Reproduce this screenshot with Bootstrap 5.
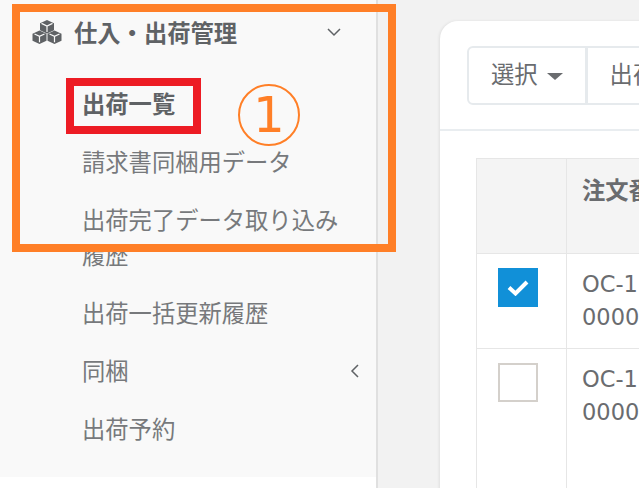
<!DOCTYPE html>
<html lang="ja">
<head>
  <meta charset="UTF-8" />
  <meta name="viewport" content="width=device-width, initial-scale=1" />
  <title>出荷一覧</title>
  <link href="https://cdn.jsdelivr.net/npm/bootstrap@5.3.0/dist/css/bootstrap.min.css" rel="stylesheet" />
  <style>
    html, body { height: 488px; overflow: hidden; }
    body {
      background: #f2f2f2;
      color: #6a6c6f;
      font-family: "Noto Sans CJK JP", "Open Sans", sans-serif;
      font-size: 23.3px;
    }
    .page-wrap { height: 488px; width: 639px; overflow: hidden; }
    .side-col {
      width: 378px;
      flex-shrink: 0;
      background: #fff;
      border-right: 2px solid #e0e0e0;
    }
    .side-menu { background: #f9f9f9; height: 477px; }
    .side-head {
      height: 64px;
      margin-bottom: 22px;
      padding-left: 32px;
      padding-right: 35px;
      font-weight: 700;
      color: #5f6265;
    }
    .side-title { gap: 12px; }
    .side-item {
      display: block;
      padding: 0 30px 0 82px;
      line-height: 35px;
      margin-bottom: 23px;
      color: #77797c;
      text-decoration: none;
    }
    .side-item.active-item { font-weight: 700; color: #5f6265; }
    .side-group { padding-right: 17px; }
    .main-col { padding: 21px 0 0 62px; }
    .panel-box {
      width: 420px;
      height: 600px;
      background: #fff;
      border-radius: 18px 0 0 0;
      box-shadow: -1px 0 3px rgba(0,0,0,.08);
    }
    .tool-bar {
      height: 110px;
      padding: 25px 0 0 27px;
      border-bottom: 2px solid #e9edf0;
    }
    .tool-group { flex-wrap: nowrap; }
    .tool-btn {
      height: 59px;
      padding: 0 22px 4px;
      font-size: 23.3px;
      color: #6a6c6f;
      background: #fff;
      border: 2px solid #e6eaed;
      white-space: nowrap;
    }
    .tool-btn.dropdown-toggle {
      border-top-right-radius: 0;
      border-bottom-right-radius: 0;
    }
    .tool-btn.dropdown-toggle::after {
      margin-left: 9px;
      border-top-width: 7px;
      border-left-width: 8px;
      border-right-width: 8px;
      vertical-align: 3px;
    }
    .table-wrap { padding: 27px 0 0 36px; }
    .order-table {
      table-layout: fixed;
      width: 500px;
      margin: 0;
      border-color: #e6e6e6;
      --bs-table-color: #6a6c6f;
      --bs-table-bg: #fff;
    }
    .order-table th, .order-table td {
      padding: 14px 15px;
      line-height: 33px;
      border-width: 1px;
      white-space: nowrap;
      overflow: hidden;
    }
    .order-table th { background: #f4f4f4; height: 95px; font-weight: 700; vertical-align: top; }
    .order-table td { height: 95px; vertical-align: top; font-family: "DejaVu Sans", sans-serif; font-size: 22.5px; }
    .order-table tr.tall-row td { height: 220px; }
    .check-cell { width: 90px; }
    .tick-box {
      width: 40px;
      height: 39px;
      margin-left: 6px;
      border: 2px solid #d4d0cb;
      background: #fff;
    }
    .tick-box.on { background: #1190d8; border-color: #1190d8; }
    .orange-frame {
      position: absolute;
      left: 12px;
      top: 4px;
      width: 384px;
      height: 248px;
      border: 8px solid #ff7f27;
    }
    .red-frame {
      position: absolute;
      left: 66px;
      top: 78px;
      width: 135px;
      height: 56px;
      border: 8px solid #ed1c24;
    }
    .num-mark {
      position: absolute;
      left: 238px;
      top: 84px;
      width: 62px;
      height: 62px;
      border: 2px solid #ff7f27;
      border-radius: 50%;
      color: #ff7f27;
      font-family: "DejaVu Sans", sans-serif;
      font-size: 50px;
      line-height: 58px;
      text-align: center;
    }
  </style>
</head>
<body>

<div class="page-wrap d-flex position-relative">
  <aside class="side-col">
    <nav class="side-menu">
      <div class="side-head d-flex align-items-center justify-content-between">
        <span class="side-title d-flex align-items-center">
          <svg width="30" height="24" viewBox="0 0 30 24" fill="#5f6265">
            <path d="M15 0l7 3.2v7L15 13.400l-7-3.200v-7z"/>
            <path d="M7.500 10.500l7 3.200v7l-7 3.300-7-3.300v-7z"/>
            <path d="M22.500 10.500l7 3.200v7l-7 3.300-7-3.300v-7z"/>
            <path d="M9.500 3.400L15 6l5.500-2.600M15 6v6M2.500 14l5 2.300 5-2.300M7.500 16.300v6M17.500 14l5 2.300 5-2.300M22.500 16.300v6" fill="none" stroke="#f9f9f9" stroke-width="1.200"/>
          </svg>
          仕入・出荷管理
        </span>
        <svg width="14" height="9" viewBox="0 0 14 9" fill="none" stroke="#5f6265" stroke-width="1.500"><path d="M1 1l6 6 6-6"/></svg>
      </div>
      <a class="side-item active-item" href="#">出荷一覧</a>
      <a class="side-item" href="#">請求書同梱用データ</a>
      <a class="side-item" href="#">出荷完了データ取り込み履歴</a>
      <a class="side-item" href="#">出荷一括更新履歴</a>
      <a class="side-item side-group d-flex justify-content-between align-items-center" href="#">
        同梱
        <svg width="9" height="14" viewBox="0 0 9 14" fill="none" stroke="#5f6265" stroke-width="1.500"><path d="M8 1L2 7l6 6"/></svg>
      </a>
      <a class="side-item" href="#">出荷予約</a>
    </nav>
  </aside>

  <main class="main-col">
    <div class="panel-box">
      <div class="tool-bar">
        <div class="btn-group tool-group">
          <button type="button" class="btn tool-btn dropdown-toggle">選択</button>
          <button type="button" class="btn tool-btn">出荷</button>
        </div>
      </div>
      <div class="table-wrap">
        <table class="table table-bordered order-table">
          <thead>
            <tr><th class="check-cell"></th><th>注文番</th></tr>
          </thead>
          <tbody>
            <tr>
              <td><div class="tick-box on d-flex align-items-center justify-content-center">
                <svg width="22" height="17" viewBox="0 0 22 17" fill="none" stroke="#fff" stroke-width="4"><path d="M2 8.500l6.500 6L20 3"/></svg>
              </div></td>
              <td>OC-1<br>0000</td>
            </tr>
            <tr class="tall-row">
              <td><div class="tick-box"></div></td>
              <td>OC-1<br>0000</td>
            </tr>
          </tbody>
        </table>
      </div>
    </div>
  </main>

  <div class="orange-frame"></div>
  <div class="red-frame"></div>
  <div class="num-mark">1</div>
</div>

<script src="https://cdn.jsdelivr.net/npm/bootstrap@5.3.0/dist/js/bootstrap.bundle.min.js"></script>
</body>
</html>
